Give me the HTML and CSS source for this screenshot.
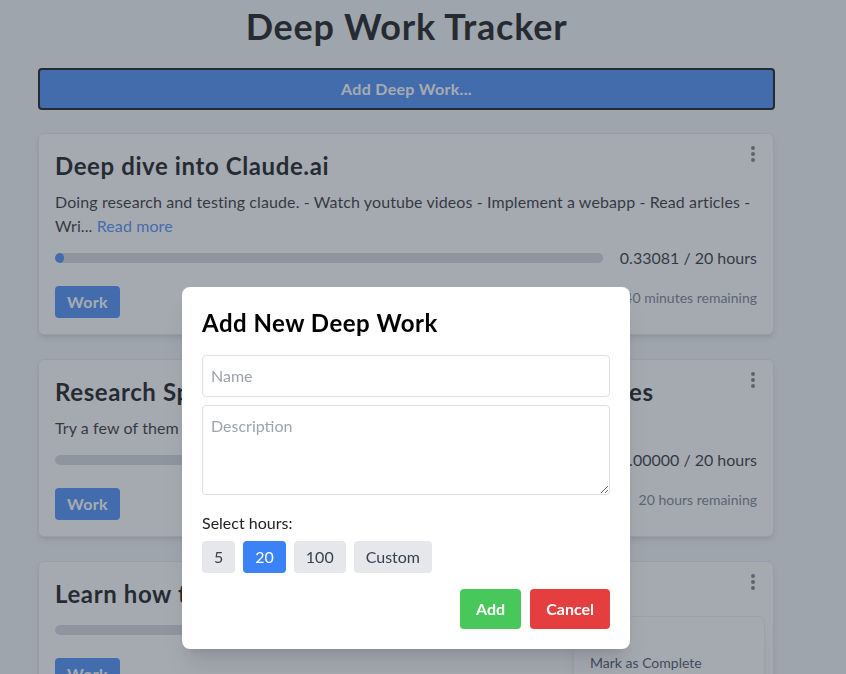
FILE: index.html
```html
<!DOCTYPE html>
<html lang="en">
<head>
<meta charset="utf-8">
<title>Deep Work Tracker</title>
<link rel="stylesheet" href="styles.css">
</head>
<body>
<div class="app">
  <h1 class="title">Deep Work Tracker</h1>
  <button class="add-btn">Add Deep Work...</button>

  <div class="card">
    <button class="kebab" aria-label="Options">
      <svg viewBox="0 0 20 20" width="20" height="20"><path d="M10 6a2 2 0 110-4 2 2 0 010 4zM10 12a2 2 0 110-4 2 2 0 010 4zM10 18a2 2 0 110-4 2 2 0 010 4z"/></svg>
    </button>
    <h2 class="card-title">Deep dive into Claude.ai</h2>
    <p class="card-desc">Doing research and testing claude. - Watch youtube videos - Implement a webapp - Read articles - Wri... <a class="read-more">Read more</a></p>
    <div class="progress-row">
      <div class="track"><div class="fill" style="width:1.65%"></div></div>
      <span class="hours">0.33081 / 20 hours</span>
    </div>
    <div class="action-row">
      <button class="work-btn">Work</button>
      <span class="remaining">19 hours 40 minutes remaining</span>
    </div>
  </div>

  <div class="card">
    <button class="kebab" aria-label="Options">
      <svg viewBox="0 0 20 20" width="20" height="20"><path d="M10 6a2 2 0 110-4 2 2 0 010 4zM10 12a2 2 0 110-4 2 2 0 010 4zM10 18a2 2 0 110-4 2 2 0 010 4z"/></svg>
    </button>
    <h2 class="card-title">Research Spaced Repetition Software and Techniques</h2>
    <p class="card-desc">Try a few of them and pick the best one</p>
    <div class="progress-row">
      <div class="track"><div class="fill" style="width:0%"></div></div>
      <span class="hours">0.00000 / 20 hours</span>
    </div>
    <div class="action-row">
      <button class="work-btn">Work</button>
      <span class="remaining">20 hours remaining</span>
    </div>
  </div>

  <div class="card">
    <button class="kebab" aria-label="Options">
      <svg viewBox="0 0 20 20" width="20" height="20"><path d="M10 6a2 2 0 110-4 2 2 0 010 4zM10 12a2 2 0 110-4 2 2 0 010 4zM10 18a2 2 0 110-4 2 2 0 010 4z"/></svg>
    </button>
    <div class="menu">
      <a class="menu-item">Edit</a>
      <a class="menu-item">Mark as Complete</a>
      <a class="menu-item">Delete</a>
    </div>
    <h2 class="card-title">Learn how to use Tailwind</h2>
    <div class="progress-row">
      <div class="track"><div class="fill" style="width:0%"></div></div>
      <span class="hours">0.00000 / 20 hours</span>
    </div>
    <div class="action-row">
      <button class="work-btn">Work</button>
      <span class="remaining">20 hours remaining</span>
    </div>
  </div>
</div>

<div class="overlay">
  <div class="modal">
    <h2 class="modal-title">Add New Deep Work</h2>
    <input class="field" type="text" placeholder="Name">
    <textarea class="field area" rows="3" placeholder="Description"></textarea>
    <p class="label">Select hours:</p>
    <div class="hour-opts">
      <button class="opt">5</button>
      <button class="opt active">20</button>
      <button class="opt">100</button>
      <button class="opt">Custom</button>
    </div>
    <div class="modal-actions">
      <button class="btn btn-add">Add</button>
      <button class="btn btn-cancel">Cancel</button>
    </div>
  </div>
</div>
</body>
</html>
```

FILE: styles.css
```css
* { box-sizing: border-box; }

body {
  margin: 0;
  background: #f3f4f6;
  font-family: Lato, "Noto Sans", sans-serif;
  color: #111;
  font-size: 16px;
  line-height: 24px;
}

button, input, textarea {
  font-family: inherit;
  font-size: 16px;
  line-height: 24px;
}

.app {
  width: 737px;
  margin-left: 38px;
  padding-top: 6px;
}

.title {
  margin: 0 0 22px;
  text-align: center;
  font-size: 36px;
  line-height: 40px;
  font-weight: 700;
  letter-spacing: 0.75px;
  color: #000;
}

.add-btn {
  display: block;
  width: 100%;
  height: 42px;
  margin-bottom: 23px;
  border: 2px solid #000;
  border-radius: 4px;
  background: #3b82f6;
  color: #fff;
  font-weight: 700;
  letter-spacing: 0.3px;
}

.card {
  position: relative;
  width: 736px;
  margin-bottom: 24px;
  padding: 16px;
  background: #fff;
  border: 1px solid #e5e7eb;
  border-radius: 6px;
  box-shadow: 0 4px 6px -1px rgba(0,0,0,0.1), 0 2px 4px -2px rgba(0,0,0,0.1);
}

.kebab {
  position: absolute;
  top: 6px;
  right: 6px;
  padding: 4px;
  border: 0;
  background: none;
  line-height: 0;
}
.kebab svg { fill: #6b7280; display: block; }

.card-title {
  margin: 0 0 8px;
  font-size: 24px;
  line-height: 32px;
  font-weight: 700;
  letter-spacing: 0.6px;
  color: #000;
}

.card-desc {
  margin: 0 0 8px;
  letter-spacing: 0.1px;
  color: #1a1a1a;
}

.read-more { color: #3b82f6; }

.progress-row {
  display: flex;
  align-items: center;
  gap: 17px;
  height: 24px;
}

.track {
  flex: 1;
  height: 10px;
  border-radius: 9999px;
  background: #d1d5db;
  overflow: hidden;
}
.fill {
  height: 100%;
  background: #3b82f6;
  border-radius: 9999px;
}

.hours { color: #1a1a1a; white-space: nowrap; }

.action-row {
  display: flex;
  justify-content: space-between;
  align-items: flex-start;
  margin-top: 16px;
}

.work-btn {
  height: 32px;
  padding: 4px 12px;
  border: 0;
  border-radius: 4px;
  background: #3b82f6;
  color: #fff;
  font-weight: 700;
  letter-spacing: 0.3px;
}

.remaining {
  margin-top: 2px;
  font-size: 14px;
  line-height: 20px;
  color: #6b7280;
}

.menu {
  position: absolute;
  top: 54px;
  right: 8px;
  width: 192px;
  padding: 4px 0;
  background: #fff;
  border: 1px solid #eceef1;
  border-radius: 6px;
  box-shadow: 0 10px 15px -3px rgba(0,0,0,0.1), 0 4px 6px -4px rgba(0,0,0,0.1);
  z-index: 5;
}
.menu-item {
  display: block;
  padding: 4px 16px;
  font-size: 14px;
  line-height: 20px;
  color: #374151;
}

.overlay {
  position: fixed;
  inset: 0;
  z-index: 10;
  display: flex;
  justify-content: center;
  align-items: flex-start;
  padding: 287px 34px 0 0;
  background: rgba(75, 85, 99, 0.5);
}

.modal {
  width: 448px;
  padding: 20px;
  background: #fff;
  border-radius: 8px;
  box-shadow: 0 20px 25px -5px rgba(0,0,0,0.1), 0 8px 10px -6px rgba(0,0,0,0.1);
}

.modal-title {
  margin: 0 0 16px;
  font-size: 24px;
  line-height: 32px;
  font-weight: 700;
  letter-spacing: 0.5px;
  color: #000;
}

.field {
  display: block;
  width: 100%;
  padding: 8px;
  border: 1px solid #dfe1e5;
  border-radius: 4px;
  color: #111;
  background: #fff;
  outline: none;
}
.field::placeholder { color: #9ca3af; }
.field + .field { margin-top: 8px; }
.area { height: 90px; resize: vertical; }

.label {
  margin: 16px 0 6px;
  color: #222;
}

.hour-opts {
  display: flex;
  gap: 8px;
}
.opt {
  height: 32px;
  padding: 4px 12px;
  border: 0;
  border-radius: 4px;
  background: #e5e7eb;
  color: #374151;
}
.opt.active {
  background: #3b82f6;
  color: #fff;
}

.modal-actions {
  display: flex;
  justify-content: flex-end;
  gap: 9px;
  margin-top: 16px;
}
.btn {
  height: 40px;
  padding: 8px 16px;
  border: 0;
  border-radius: 4px;
  color: #fff;
  font-weight: 700;
}
.btn-add { background: #48c75a; }
.btn-cancel { background: #e53e3e; }
```
